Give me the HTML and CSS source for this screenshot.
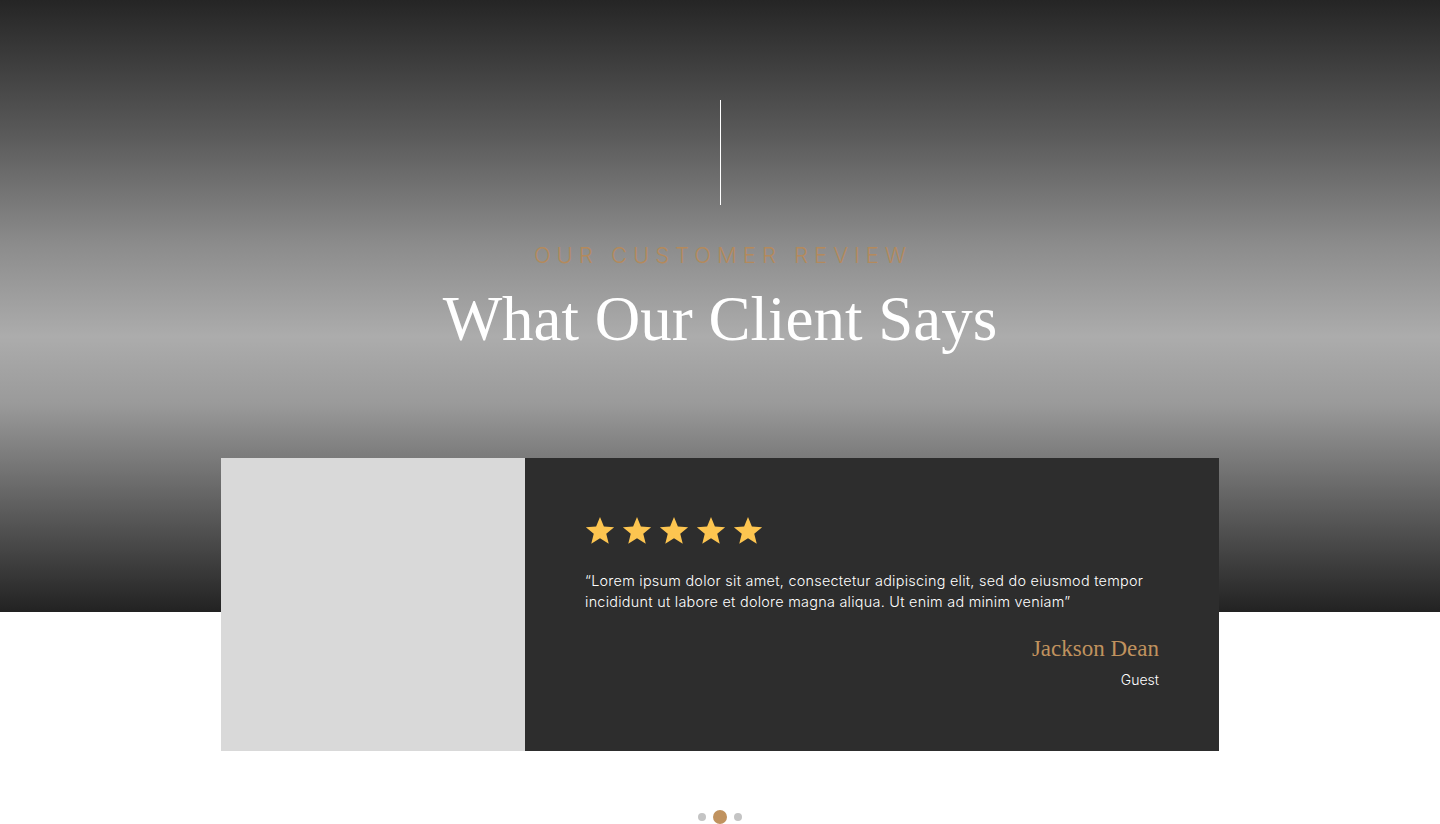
FILE: index.html
```html
<!DOCTYPE html>
<html lang="en">
<head>
<meta charset="utf-8">
<title>What Our Client Says</title>
<link rel="stylesheet" href="styles.css">
</head>
<body>
<main class="page">
  <section class="hero">
    <div class="divider"></div>
    <p class="eyebrow">OUR CUSTOMER REVIEW</p>
    <h1 class="title">What Our Client Says</h1>
  </section>
  <article class="card">
    <div class="photo"></div>
    <div class="review">
      <div class="stars">
        <svg viewBox="0 0 24 24"><path d="M12 1.5l3.1 7.6 8.2.6-6.3 5.3 2 8L12 18.6 5 23l2-8L.7 9.7l8.2-.6z"/></svg>
        <svg viewBox="0 0 24 24"><path d="M12 1.5l3.1 7.6 8.2.6-6.3 5.3 2 8L12 18.6 5 23l2-8L.7 9.7l8.2-.6z"/></svg>
        <svg viewBox="0 0 24 24"><path d="M12 1.5l3.1 7.6 8.2.6-6.3 5.3 2 8L12 18.6 5 23l2-8L.7 9.7l8.2-.6z"/></svg>
        <svg viewBox="0 0 24 24"><path d="M12 1.5l3.1 7.6 8.2.6-6.3 5.3 2 8L12 18.6 5 23l2-8L.7 9.7l8.2-.6z"/></svg>
        <svg viewBox="0 0 24 24"><path d="M12 1.5l3.1 7.6 8.2.6-6.3 5.3 2 8L12 18.6 5 23l2-8L.7 9.7l8.2-.6z"/></svg>
      </div>
      <p class="quote">“Lorem ipsum dolor sit amet, consectetur adipiscing elit, sed do eiusmod tempor incididunt ut labore et dolore magna aliqua. Ut enim ad minim veniam”</p>
      <p class="name">Jackson Dean</p>
      <p class="role">Guest</p>
    </div>
  </article>
  <nav class="dots">
    <span class="dot"></span>
    <span class="dot active"></span>
    <span class="dot"></span>
  </nav>
</main>
</body>
</html>
```
FILE: styles.css
```css
* { box-sizing: border-box; }
html, body { margin: 0; padding: 0; }
body {
  background: #ffffff;
  font-family: "Inter", "Liberation Sans", sans-serif;
}
.page {
  width: 1440px;
  height: 824px;
  overflow: hidden;
  background: linear-gradient(to bottom, #252525 0%, #5a5a5a 22%, #8c8c8c 40%, #acacac 55%, #9a9a9a 66%, #5a5a5a 84%, #222222 100%) no-repeat;
  background-size: 100% 612px;
  display: flex;
  flex-direction: column;
  align-items: center;
}
.page > * { flex-shrink: 0; }
.hero {
  width: 100%;
  display: flex;
  flex-direction: column;
  align-items: center;
  padding-top: 100px;
}
.divider {
  width: 1px;
  height: 105px;
  background: #ffffff;
}
.eyebrow {
  margin: 37px 0 0;
  font-family: "Inter", sans-serif;
  font-weight: 300;
  font-size: 22px;
  line-height: 26px;
  letter-spacing: 6px;
  color: #b48a5c;
  padding-left: 6px;
}
.title {
  margin: 13px 0 0;
  font-family: "Liberation Serif", serif;
  font-weight: 400;
  font-size: 63px;
  line-height: 76px;
  color: #ffffff;
}
.card {
  margin-top: 101px;
  width: 998px;
  height: 293px;
  display: flex;
}
.photo {
  width: 304px;
  background: #d9d9d9;
}
.review {
  flex: 1;
  background: #2d2d2d;
  padding: 57px 60px 0 60px;
  display: flex;
  flex-direction: column;
}
.stars {
  display: flex;
  gap: 7px;
}
.stars svg {
  width: 30px;
  height: 30px;
  fill: #fdc550;
}
.quote {
  margin: 25px 0 0;
  font-size: 14.4px;
  line-height: 21px;
  font-weight: 300;
  letter-spacing: 0.27px;
  color: #ffffff;
  max-width: 576px;
}
.name {
  margin: 23px 0 0;
  text-align: right;
  font-family: "Liberation Serif", serif;
  font-size: 23px;
  line-height: 28px;
  color: #c0925e;
}
.role {
  margin: 8px 0 0;
  text-align: right;
  font-size: 14px;
  line-height: 18px;
  font-weight: 300;
  color: #ffffff;
}
.dots {
  margin-top: 59px;
  display: flex;
  align-items: center;
  gap: 7px;
}
.dot {
  width: 8px;
  height: 8px;
  border-radius: 50%;
  background: #c4c4c4;
}
.dot.active {
  width: 14px;
  height: 14px;
  background: #c0925e;
}
```
